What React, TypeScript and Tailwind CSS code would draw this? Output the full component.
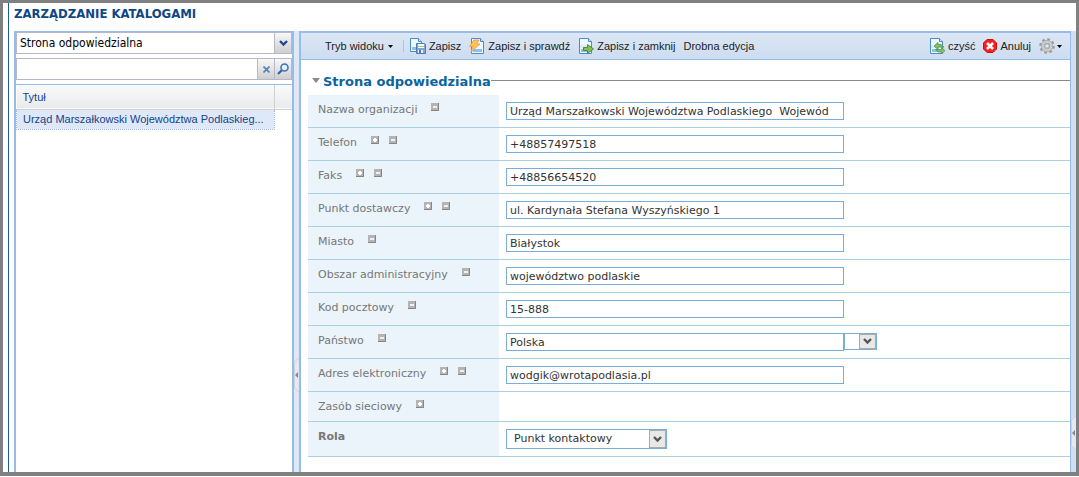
import React from 'react';

interface Field {
  id: string;
  label: string;
  value?: string;
  add?: boolean;
  remove?: boolean;
  picker?: boolean;
}

const fields: Field[] = [
  { id: 'org', label: 'Nazwa organizacji', value: 'Urząd Marszałkowski Województwa Podlaskiego  Wojewód', remove: true },
  { id: 'phone', label: 'Telefon', value: '+48857497518', add: true, remove: true },
  { id: 'fax', label: 'Faks', value: '+48856654520', add: true, remove: true },
  { id: 'street', label: 'Punkt dostawczy', value: 'ul. Kardynała Stefana Wyszyńskiego 1', add: true, remove: true },
  { id: 'city', label: 'Miasto', value: 'Białystok', remove: true },
  { id: 'area', label: 'Obszar administracyjny', value: 'województwo podlaskie', remove: true },
  { id: 'zip', label: 'Kod pocztowy', value: '15-888', remove: true },
  { id: 'country', label: 'Państwo', value: 'Polska', remove: true, picker: true },
  { id: 'email', label: 'Adres elektroniczny', value: 'wodgik@wrotapodlasia.pl', add: true, remove: true },
];

const Sheet = () => (
  <>
    <path d="M1.500 .5h9l3 3v12h-12z" fill="#f1f7fe" stroke="#4c8ccb" />
    <path d="M10.500 .5v3h3" fill="#cfe3f7" stroke="#4c8ccb" />
    <path d="M2 7h11v3H2z" fill="#dcebfa" />
    <path d="M3 11h6v3H3z" fill="#8cc0ee" />
  </>
);

const SaveIcon = () => (
  <svg width="16" height="16" viewBox="0 0 16 16">
    <path d="M.5 .5h8l3 3v10H.5z" fill="#f1f7fe" stroke="#4c8ccb" />
    <path d="M8.500 .5v3h3" fill="#cfe3f7" stroke="#4c8ccb" />
    <path d="M2 9h4v3H2z" fill="#8cc0ee" />
    <path d="M6.500 5.500h8l1 1v9h-9z" fill="#7fa5da" stroke="#5078b4" />
    <path d="M8 6h6v4H8z" fill="#fff" />
    <path d="M8 8h6v1H8z" fill="#a9c98f" />
    <path d="M8 12h5v3H8z" fill="#ececec" />
    <path d="M9 12h2v3H9z" fill="#5078b4" />
  </svg>
);

const CheckSaveIcon = () => (
  <svg width="16" height="16" viewBox="0 0 16 16">
    <path d="M2.500 .5h9l3 3v12h-12z" fill="#f1f7fe" stroke="#4c8ccb" />
    <path d="M11.500 .5v3h3" fill="#cfe3f7" stroke="#4c8ccb" />
    <path d="M4 11h9v3H4z" fill="#8cc0ee" />
    <path d="M5 2h5L7.500 6H11L2 14l2-5.500H.5z" fill="#ffc653" stroke="#e89a3c" strokeWidth=".8" />
  </svg>
);

const CloseSaveIcon = () => (
  <svg width="16" height="16" viewBox="0 0 16 16">
    <Sheet />
    <path d="M5.500 9.500h4v-3l6 4.500-6 4.500v-3h-4z" fill="#84bf5c" stroke="#4e8c35" />
  </svg>
);

const ClearIcon = () => (
  <svg width="16" height="16" viewBox="0 0 16 16">
    <Sheet />
    <path d="M5 8l4-3.500V6.500h3L15 9H9v2.500z" fill="#83c16a" stroke="#4b963f" strokeWidth=".8" />
    <path d="M16 12.500L12.500 9.500v2H6.500L9 14h3.500v2z" fill="#83c16a" stroke="#4b963f" strokeWidth=".8" />
  </svg>
);

const CancelIcon = () => (
  <svg width="14" height="14" viewBox="0 0 14 14">
    <path d="M4 .5h6L13.500 4v6L10 13.500H4L.5 10V4z" fill="#f52020" stroke="#d80a0a" />
    <path d="M4 4l6 6M10 4l-6 6" stroke="#fff" strokeWidth="2.600" />
  </svg>
);

const GearIcon = () => (
  <svg width="16" height="16" viewBox="0 0 16 16">
    <circle cx="8" cy="8" r="6.600" fill="none" stroke="#9a9a9a" strokeWidth="2.400" strokeDasharray="2.700 2.480" />
    <circle cx="8" cy="8" r="4.300" fill="none" stroke="#9a9a9a" strokeWidth="3.400" />
    <circle cx="8" cy="8" r="4.300" fill="none" stroke="#cccccc" strokeWidth="2.400" />
    <circle cx="8" cy="8" r="2.200" fill="#dce7f5" stroke="#9a9a9a" strokeWidth=".8" />
  </svg>
);

const Caret = () => (
  <svg width="5" height="3" viewBox="0 0 5 3">
    <path d="M0 0h5L2.500 3z" fill="#000" />
  </svg>
);

const Chevron = ({ color }: { color: string }) => (
  <svg width="9" height="7" viewBox="0 0 9 7">
    <path d="M1 1l3.500 3.500L8 1" fill="none" stroke={color} strokeWidth="2.400" />
  </svg>
);

const MiniButton = ({ kind, name }: { kind: 'plus' | 'minus'; name: string }) => (
  <button type="button" aria-label={`${kind} ${name}`} className="h-2 w-[9px]">
    <svg width="8" height="8" viewBox="0 0 8 8">
      <path d="M0 0h8v8H0z" fill="#b4b4b4" />
      <path d="M0 7.500h7.500V0" fill="none" stroke="#858585" />
      {kind === 'plus' ? (
        <path d="M3 2h2v1h1v2H5v1H3V5H2V3h1z" fill="#fff" />
      ) : (
        <path d="M2 3h4v2H2z" fill="#f0f0f0" />
      )}
    </svg>
  </button>
);

const Handle = () => (
  <button type="button" aria-label="Zwiń panel" className="flex h-[34px] w-[5px] items-center justify-center">
    <svg width="5" height="34" viewBox="0 0 5 34">
      <path d="M5 0L.5 4v26L5 34" fill="#e4e9f0" stroke="#cdd3dc" />
      <path d="M4 14v6L1 17z" fill="#808890" />
    </svg>
  </button>
);

interface ToolButtonProps {
  icon?: React.ReactNode;
  children: React.ReactNode;
}

const ToolButton: React.FC<ToolButtonProps> = ({ icon, children }) => (
  <button type="button" className="flex items-center gap-[3px] whitespace-nowrap">
    {icon}
    {children}
  </button>
);

const Row = ({ children }: { children: React.ReactNode }) => (
  <div className="flex border-b border-[#a9cfe2]">{children}</div>
);

const labelCell = 'flex w-[191px] shrink-0 items-start bg-[#eaf4fa] pl-[10px] pt-2';
const labelText = 'mr-[14px] pt-px leading-3';

const Sidebar = () => (
  <aside className="flex w-[280px] shrink-0 flex-col border-x-2 border-t border-[#99bbe8] bg-white">
    <div className="relative">
      <select
        aria-label="Katalog"
        className="block h-[22px] w-full appearance-none border border-[#b5b8c8] bg-white px-[3px] font-['DejaVu_Sans_Condensed','DejaVu_Sans',sans-serif] text-[12px] text-black"
      >
        <option>Strona odpowiedzialna</option>
      </select>
      <span className="pointer-events-none absolute inset-y-0 right-0 flex w-[18px] items-center justify-center border border-[#b5b8c8] bg-linear-to-b from-[#f8f8f8] to-[#cfcfcf]">
        <Chevron color="#24478f" />
      </span>
    </div>
    <form className="mt-1 flex h-[22px] border border-[#b5b8c8]">
      <input aria-label="Szukaj" type="text" className="min-w-0 flex-1 px-1 text-[12px] outline-none" />
      <button type="button" aria-label="Wyczyść" className="flex w-[17px] items-center justify-center border-l border-[#b5b8c8] bg-linear-to-b from-[#f8f8f8] to-[#cfcfcf]">
        <svg width="7" height="7" viewBox="0 0 7 7">
          <path d="M.5 .5l6 6M6.500 .5l-6 6" stroke="#4f83bd" strokeWidth="1.600" />
        </svg>
      </button>
      <button type="button" aria-label="Szukaj" className="flex w-[17px] items-center justify-center border-l border-[#b5b8c8] bg-linear-to-b from-[#f8f8f8] to-[#cfcfcf]">
        <svg width="12" height="12" viewBox="0 0 12 12">
          <path d="M5 7L1 11" stroke="#2f62a8" strokeWidth="2.200" />
          <circle cx="7.500" cy="4.500" r="3.500" fill="#e3eefa" stroke="#3f74b8" strokeWidth="1.600" />
        </svg>
      </button>
    </form>
    <div className="mt-1 flex-1 border-t border-[#99bbe8]">
      <table className="w-full table-fixed border-collapse text-left text-[11px] text-[#15428b]">
        <thead>
          <tr className="h-6 border-b border-[#d0d0d0] bg-linear-to-b from-[#fafafa] to-[#e8eaec]">
            <th className="border-r border-[#d0d0d0] pl-[6px] font-normal">Tytuł</th>
            <th className="w-[18px]" aria-label="Opcje" />
          </tr>
        </thead>
        <tbody>
          <tr className="h-5">
            <td className="whitespace-nowrap border border-dotted border-[#a3bae9] bg-[#dfe8f6] pl-[6px]">
              Urząd Marszałkowski Województwa Podlaskieg...
            </td>
            <td />
          </tr>
        </tbody>
      </table>
    </div>
  </aside>
);

const Toolbar = () => (
  <div className="flex h-[27px] items-center border-b border-[#99bbe8] bg-linear-to-b from-[#dce7f5] to-[#cddcf0] pl-6 pr-2 text-[11px] text-[#222]">
    <button type="button" className="flex items-center gap-1">
      Tryb widoku
      <Caret />
    </button>
    <span className="ml-[10px] mr-[6px] h-3 w-px bg-[#98c8ff]" />
    <div className="flex items-center gap-2">
      <ToolButton icon={<SaveIcon />}>Zapisz</ToolButton>
      <ToolButton icon={<CheckSaveIcon />}>Zapisz i sprawdź</ToolButton>
      <ToolButton icon={<CloseSaveIcon />}>Zapisz i zamknij</ToolButton>
      <ToolButton>Drobna edycja</ToolButton>
    </div>
    <div className="ml-auto flex items-center gap-2">
      <ToolButton icon={<ClearIcon />}>czyść</ToolButton>
      <ToolButton icon={<CancelIcon />}>Anuluj</ToolButton>
      <button type="button" aria-label="Ustawienia" className="flex items-center gap-[2px]">
        <GearIcon />
        <Caret />
      </button>
    </div>
  </div>
);

const Editor = () => (
  <main className="min-w-0 flex-1 border-l-2 border-r border-t-2 border-[#99bbe8] bg-white">
    <Toolbar />
    <form className="pl-[7px] pt-[13px] font-['DejaVu_Sans',sans-serif] text-[11px] text-[#777]">
      <h2 className="flex h-[18px] items-center text-[13px] font-bold text-[#0a64a0]">
        <svg width="8" height="5" viewBox="0 0 8 5" className="mb-1 ml-1 mr-[3px]">
          <path d="M0 0h8L4 5z" fill="#8a8a8a" />
        </svg>
        Strona odpowiedzialna
        <span className="mb-1 h-px flex-1 bg-[#888]" />
      </h2>
      <div className="mt-1">
        {fields.map((f) => (
          <Row key={f.id}>
            <div className={labelCell}>
              <label htmlFor={f.id} className={labelText}>{f.label}</label>
              <span className="flex gap-[9px]">
                {f.add && <MiniButton kind="plus" name={f.label} />}
                {f.remove && <MiniButton kind="minus" name={f.label} />}
              </span>
            </div>
            <div className="flex h-8 min-w-0 pl-[7px] pt-[7px]">
              <input
                id={f.id}
                type="text"
                defaultValue={f.value}
                className="h-[18px] w-[338px] border border-[#7badd8] bg-white px-[3px] text-[#333] outline-none"
              />
              {f.picker && (
                <span className="relative h-[17px] w-[33px]">
                  <select aria-label="Wybierz państwo" className="h-full w-full appearance-none border border-[#7badd8] bg-white" />
                  <span className="pointer-events-none absolute inset-y-px right-px flex w-[17px] items-center justify-center border border-[#aaa] bg-[#e8e8e8]">
                    <Chevron color="#555" />
                  </span>
                </span>
              )}
            </div>
          </Row>
        ))}
        <Row>
          <div className={labelCell}>
            <span className={labelText}>Zasób sieciowy</span>
            <MiniButton kind="plus" name="Zasób sieciowy" />
          </div>
          <div className="h-[29px]" />
        </Row>
        <Row>
          <div className={labelCell}>
            <label htmlFor="role" className="pt-px font-bold leading-3">Rola</label>
          </div>
          <div className="h-[34px] pl-[7px] pt-[7px]">
            <span className="relative block h-5 w-[161px]">
              <select id="role" className="h-full w-full appearance-none border border-[#7badd8] bg-white px-[7px] text-[#333]">
                <option>Punkt kontaktowy</option>
              </select>
              <span className="pointer-events-none absolute inset-y-px right-px flex w-[17px] items-center justify-center border border-[#aaa] bg-[#e8e8e8]">
                <Chevron color="#555" />
              </span>
            </span>
          </div>
        </Row>
      </div>
    </form>
  </main>
);

const App: React.FC = () => {
  return (
    <div className="flex min-h-screen flex-col bg-white pb-px font-['Liberation_Sans',sans-serif]">
      <div className="flex flex-1 border-[3px] border-b-4 border-[#808080] pl-[5px]">
        <div className="flex min-w-0 flex-1 flex-col border-l border-[#1f5c99]">
          <h1 className="flex h-7 items-center pb-[7px] pl-[5px] font-['DejaVu_Sans_Condensed','DejaVu_Sans',sans-serif] text-[13px] font-bold text-[#0f4785]">
            ZARZĄDZANIE KATALOGAMI
          </h1>
          <div className="flex flex-1 pl-[5px]">
            <Sidebar />
            <div className="flex w-[5px] shrink-0 items-center bg-[#dfe8f6] pt-[246px]">
              <Handle />
            </div>
            <Editor />
            <div className="flex w-[5px] shrink-0 items-end bg-[#d0dff3] pb-[22px]">
              <Handle />
            </div>
          </div>
        </div>
      </div>
    </div>
  );
};

export default App;
